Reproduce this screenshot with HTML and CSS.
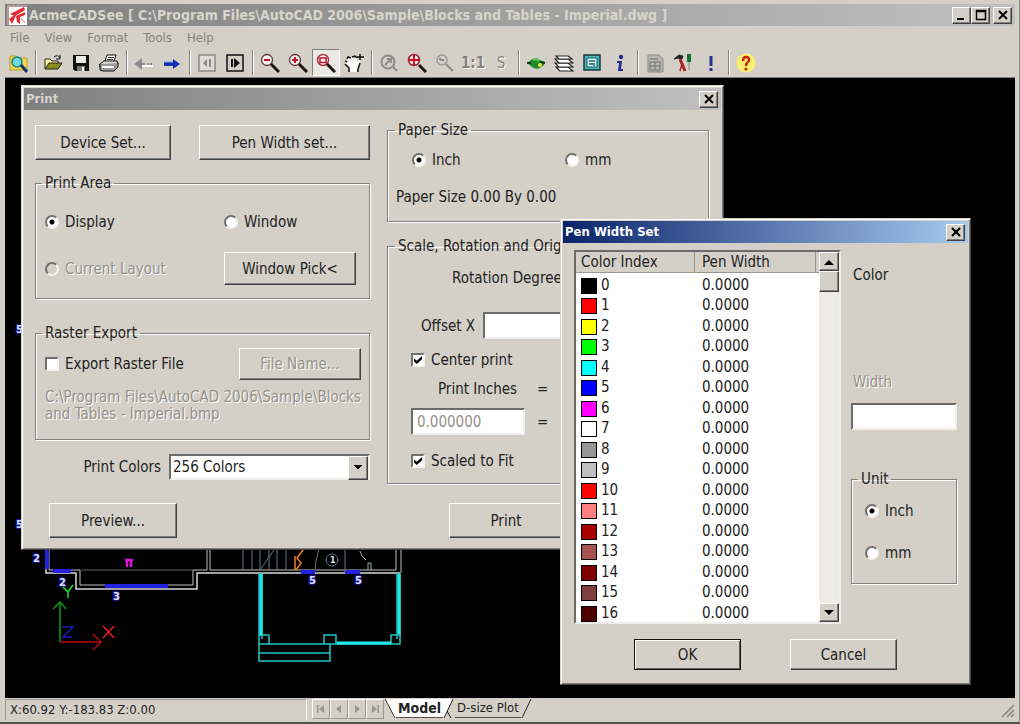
FILE: index.html
```
<!DOCTYPE html>
<html lang="en">
<head>
<meta charset="utf-8">
<title>AcmeCADSee</title>
<link rel="stylesheet" href="styles.css">
</head>
<body>
<div class="app">
  <header class="titlebar app-title">
    <svg class="logo" viewBox="0 0 20 20"><path d="M0 0h20v20H0z" fill="#fff"/><path d="M0 0h20v2H0zM0 0h2v20H0z" fill="#b99"/><path d="M3 9L17 2l1 3L8 11zM2 14l8-6-5 11zM9 11l9-4v3l-5 2v7l-3-2z" fill="#e32a35"/><path d="M14 13l4 5" stroke="#e77" stroke-width="1"/></svg>
    <h1 class="title-text">AcmeCADSee [ C:\Program Files\AutoCAD 2006\Sample\Blocks and Tables - Imperial.dwg ]</h1>
    <div class="win-buttons">
      <button class="win-btn" aria-label="Minimize"><svg viewBox="0 0 14 12"><path d="M2 10h7" stroke="#000" stroke-width="2"/></svg></button>
      <button class="win-btn" aria-label="Maximize"><svg viewBox="0 0 14 12"><path d="M2.5 1.5h9v9h-9zM2 2.5h10" fill="none" stroke="#000" stroke-width="1.5"/></svg></button>
      <button class="win-btn close" aria-label="Close"><svg viewBox="0 0 14 12"><path d="M3 2l8 8M11 2l-8 8" stroke="#000" stroke-width="2"/></svg></button>
    </div>
  </header>

  <nav class="menubar">
    <button>File</button><button>View</button><button>Format</button><button>Tools</button><button>Help</button>
  </nav>

  <div class="toolbar">
    <button class="tool" aria-label="Browse"><svg viewBox="0 0 20 20"><path d="M1 3h6l2 2h9v12H1z" fill="#f2dc4a" stroke="#b8962a"/><circle cx="8" cy="9" r="5" fill="#6fdcd8" stroke="#1d7d84" stroke-width="1.5"/><path d="M12 12l6 7" stroke="#12306e" stroke-width="3"/></svg></button>
    <i class="sep"></i>
    <button class="tool" aria-label="Open"><svg viewBox="0 0 20 20"><path d="M2 16V6h5l2 2h6v2" fill="#fff8a0" stroke="#222"/><path d="M2 16l4-6h13l-4 6z" fill="#8d8a1c" stroke="#222"/><path d="M11 4q4-3 6 1m0-3v4h-4" fill="none" stroke="#111"/></svg></button>
    <button class="tool" aria-label="Save"><svg viewBox="0 0 20 20"><path d="M2 2h16v16H4l-2-2z" fill="#111"/><path d="M5 3h10v7H5z" fill="#eceae4"/><path d="M6 13h8v5H6z" fill="#777"/><path d="M11 14h2v4h-2z" fill="#fff"/></svg></button>
    <button class="tool" aria-label="Print"><svg viewBox="0 0 20 20"><path d="M6 8l2-6h9l-2 6" fill="#fff" stroke="#111"/><path d="M9 4.5h6M8 6.5h6" stroke="#333"/><path d="M1 11l4-3h13l1 3-3 3H1z" fill="#ddd" stroke="#111"/><path d="M1 11v6l3 1h11l4-4v-4" fill="#999" stroke="#111"/><path d="M3 14h12" stroke="#fff" stroke-width="2"/></svg></button>
    <i class="sep"></i>
    <button class="tool" aria-label="Previous" disabled><svg viewBox="0 0 20 20"><path d="M3 13h16" stroke="#fff" fill="none" stroke-width="2"/><path d="M7 7l-5 4 5 4zM3 11h8m2 0h2m1 0h2" stroke="#8a8a8a" fill="#8a8a8a" stroke-width="2"/></svg></button>
    <button class="tool" aria-label="Next"><svg viewBox="0 0 20 20"><path d="M2 9h9V6l7 5-7 5v-3H2z" fill="#1532b0"/><path d="M2 9h9" stroke="#6fa3e8"/></svg></button>
    <i class="sep"></i>
    <button class="tool" aria-label="Previous layout" disabled><svg viewBox="0 0 20 20"><path d="M2 2h16v16H2z" fill="#dedbd4" stroke="#8a8a8a" stroke-width="1.5"/><path d="M10 6v8l-4-4zM12 6h2v8h-2z" fill="#8a8a8a"/></svg></button>
    <button class="tool" aria-label="Next layout"><svg viewBox="0 0 20 20"><path d="M2 2h16v16H2z" fill="#d4d0c8" stroke="#111" stroke-width="1.5"/><path d="M9 5v10l6-5zM6 6h2v8H6z" fill="#111"/></svg></button>
    <i class="sep"></i>
    <button class="tool" aria-label="Zoom out"><svg viewBox="0 0 20 20"><circle cx="7" cy="7" r="5.5" fill="#f8eeec" stroke="#5a3434" stroke-width="1.3"/><path d="M11 11l8 8" stroke="#1a1412" stroke-width="3"/><path d="M4 7h6" stroke="#b8122a" stroke-width="2"/></svg></button>
    <button class="tool" aria-label="Zoom in"><svg viewBox="0 0 20 20"><circle cx="7" cy="7" r="5.5" fill="#f8eeec" stroke="#5a3434" stroke-width="1.3"/><path d="M11 11l8 8" stroke="#1a1412" stroke-width="3"/><path d="M4 7h6M7 4v6" stroke="#c8122a" stroke-width="2"/></svg></button>
    <button class="tool pressed" aria-label="Zoom window" aria-pressed="true"><svg viewBox="0 0 20 20"><circle cx="7" cy="7" r="5.5" fill="#f8eeec" stroke="#a03440" stroke-width="1.5"/><path d="M11 11l8 8" stroke="#1a1412" stroke-width="3"/><path d="M4 5h6v4.5H4z" fill="#fff" stroke="#b8122a" stroke-width="1.5"/></svg></button>
    <button class="tool" aria-label="Pan"><svg viewBox="0 0 20 20"><path d="M5 13L1 10q0-2 2-1l2 1-2-4q0-2 2-1l2 3V5q1-2 2 0l1 3 1-3q2-1 2 1v3l2-2q2 0 1 2l-2 6-2 4H7z" fill="#fff"/><path d="M1 8l2 1M3 6l1-2 3 1M8 4l3-1 2 2M1 11l4 4v4M16 10l-2 6v3" stroke="#111" fill="none" stroke-width="1.5"/><path d="M16 1v6M13 4h7" stroke="#111" stroke-width="1.5"/></svg></button>
    <i class="sep"></i>
    <button class="tool" aria-label="Zoom dynamic" disabled><svg viewBox="0 0 20 20"><circle cx="9" cy="9" r="6.5" fill="none" stroke="#8c8c8c" stroke-width="2"/><path d="M14 14l4 4M6 12l6-6H8m4 0v4" stroke="#8c8c8c" stroke-width="2" fill="none"/></svg></button>
    <button class="tool" aria-label="Zoom extents"><svg viewBox="0 0 20 20"><circle cx="7" cy="7" r="5.5" fill="#f6d4d4" stroke="#8a2434" stroke-width="1.5"/><path d="M12 12l7 7" stroke="#1a1412" stroke-width="3"/><path d="M1 7h12M7 1v12" stroke="#c8122a" stroke-width="2"/><path d="M4 4l1 1M10 4l-1 1M4 10l1-1M10 10l-1-1" stroke="#fff" stroke-width="2"/></svg></button>
    <button class="tool" aria-label="Zoom previous" disabled><svg viewBox="0 0 20 20"><circle cx="7" cy="7" r="5" fill="none" stroke="#999" stroke-width="1.5"/><path d="M11 11l7 7M5 7h4M5 5v2" stroke="#8c8c8c" stroke-width="2"/></svg></button>
    <button class="tool tool-text" disabled>1:1</button>
    <button class="tool tool-text thin" disabled>S</button>
    <i class="sep"></i>
    <button class="tool" aria-label="View"><svg viewBox="0 0 20 20"><path d="M1 10l4-3q5-4 9 0l5 2-1 3-4 3q-5 2-8-1z" fill="#1d8a2c"/><path d="M1 10h4M14 9l5 1" stroke="#113a14" stroke-width="2"/><path d="M7 7q4-2 6 1" stroke="#63cf52" fill="none" stroke-width="2"/><circle cx="14" cy="12" r="2" fill="#e8e84a"/></svg></button>
    <button class="tool" aria-label="Layers"><svg viewBox="0 0 20 20"><g fill="#fff" stroke="#222" stroke-width="1.2"><path d="M6 18l-4-4h12l5 4z"/><path d="M5 14l-4-4h13l5 4z"/><path d="M5 10L1 6h13l5 4z"/><path d="M5 6L2 3h12l4 3z"/></g></svg></button>
    <button class="tool" aria-label="Layouts"><svg viewBox="0 0 20 20"><path d="M2 2h16v15H2z" fill="#45b9b7" stroke="#16343a" stroke-width="1.5"/><path d="M5 5h10v9H5z" fill="#d9f3ee" stroke="#16545a"/><path d="M7 8h6M7 11h4M12 10v3" stroke="#166a70" stroke-width="1.5"/></svg></button>
    <button class="tool" aria-label="Information"><svg viewBox="0 0 20 20"><circle cx="11" cy="4" r="2.2" fill="#1c2c94"/><path d="M7 8h5l-1 8h2v2H8l1-8H7z" fill="#1c2c94"/></svg></button>
    <i class="sep"></i>
    <button class="tool" aria-label="Batch" disabled><svg viewBox="0 0 20 20"><path d="M3 2h11l4 4v13H3z" fill="#bbb8b2" stroke="#888"/><path d="M5 6h8M5 9h10v8H5zM5 13h10M10 9v8" stroke="#858585" stroke-width="1.5" fill="none"/></svg></button>
    <button class="tool" aria-label="Settings"><svg viewBox="0 0 20 20"><path d="M1 6l5-4 4 1-1 3-4-1z" fill="#222" stroke="#222"/><path d="M7 6l5 12" stroke="#a32420" stroke-width="3"/><path d="M9 11l-2 7" stroke="#a32420" stroke-width="1.5"/><path d="M16 1v8" stroke="#13702c" stroke-width="4"/><path d="M16 9v8" stroke="#7d8b7f"/></svg></button>
    <button class="tool" aria-label="Notice"><svg viewBox="0 0 20 20"><path d="M10 3v10M10 15v3" stroke="#27358f" stroke-width="3"/></svg></button>
    <i class="sep"></i>
    <button class="tool" aria-label="Help"><svg viewBox="0 0 20 20"><circle cx="10" cy="10" r="9.5" fill="#fbf06e"/><path d="M7 8q0-4 3-4t3 3q0 2-2 3-1 1-1 3" stroke="#c22a12" stroke-width="2.5" fill="none"/><circle cx="10" cy="16" r="1.6" fill="#c22a12"/></svg></button>
  </div>

  <main class="canvas">
    <svg class="drawing" viewBox="5 78 1010 620" preserveAspectRatio="xMinYMin meet">
      <g fill="none">
        <path d="M46 540v33h30v16h121v-16h203" stroke="#d8d8d8" stroke-width="1.5"/>
        <path d="M49 540v30h31v15h113v-15h14M207 540v30M210 540v30h186v-30M401 540v33" stroke="#c0c0c0"/>
        <path d="M81 570h112" stroke="#666"/>
        <path d="M47 540v29M53 571h18M105 586h63M301 572h14M345 572h15" stroke="#2222e0" stroke-width="4"/>
        <path d="M243 540v30M252 540v30M260 540v30M269 540v30M277 540v30M286 540v30M260 570l14-20M315 570q1-20 10-30M345 540v32" stroke="#6a7480"/>
        <path d="M303 550l-6 8 4 5-5 7M295 556v14" stroke="#f08020" stroke-width="1.5"/>
        <circle cx="332" cy="560" r="6" stroke="#6a7890"/>
        <path d="M360 551l2 5 4 4M368 570v-7h3v7" stroke="#9ab0b8"/>
        <path d="M125 560h8M127 560v7M131 560v7" stroke="#e010e0" stroke-width="2.5"/>
        <path d="M259 573v88h71v-17M262 573v66M259 644h71M259 653h71M400 573v71h-70M397 573v66M259 635h10v9M324 644v-9h12v9M391 644v-9h10" stroke="#20c8c8" stroke-width="1.5"/>
        <path d="M261 574v61M399 574v60M337 643h54" stroke="#20e8e8" stroke-width="3"/>
        <path d="M60 642v-40M53 609l7-7 6 7" stroke="#0a9a12" stroke-width="1.5"/>
        <path d="M62 586l6 6 5-7M68 592v6" stroke="#20e020" stroke-width="1.5"/>
        <path d="M60 642h41M93 634l8 8-8 8" stroke="#b80c0c" stroke-width="1.5"/>
        <path d="M103 626l11 12M114 626l-11 12" stroke="#f01818" stroke-width="1.5"/>
        <path d="M62 627h11l-10 10h9" stroke="#1818b8" stroke-width="1.5"/>
      </g>
      <g class="marks">
        <text x="33" y="562">2</text><text x="59" y="586">2</text><text x="113" y="600">3</text><text x="309" y="584">5</text><text x="355" y="584">5</text><text x="16" y="333">5</text><text x="16" y="528">5</text><text x="330" y="563" class="plain">1</text>
      </g>
    </svg>

    <form class="dialog print-dialog">
      <header class="titlebar inactive">
        <h2 class="title-text">Print</h2>
        <button type="button" class="win-btn" aria-label="Close"><svg viewBox="0 0 14 12"><path d="M3 2l8 8M11 2l-8 8" stroke="#000" stroke-width="2"/></svg></button>
      </header>
      <div class="print-body">
        <div class="col left-col">
          <div class="row split">
            <button type="button" class="btn device-btn">Device Set...</button>
            <button type="button" class="btn pen-btn">Pen Width set...</button>
          </div>
          <fieldset class="group area-group">
            <legend>Print Area</legend>
            <label class="opt"><input type="radio" name="area" checked>Display</label>
            <label class="opt"><input type="radio" name="area">Window</label>
            <label class="opt disabled"><input type="radio" name="area" disabled>Current Layout</label>
            <button type="button" class="btn pick-btn">Window Pick&lt;</button>
          </fieldset>
          <fieldset class="group raster-group">
            <legend>Raster Export</legend>
            <div class="row split">
              <label class="opt"><input type="checkbox">Export Raster File</label>
              <button type="button" class="btn file-btn" disabled>File Name...</button>
            </div>
            <p class="path disabled">C:\Program Files\AutoCAD 2006\Sample\Blocks and Tables - Imperial.bmp</p>
          </fieldset>
          <div class="row colors-row">
            <label for="colors">Print Colors</label>
            <span class="select-wrap"><select id="colors"><option>256 Colors</option></select></span>
          </div>
        </div>
        <div class="col right-col">
          <fieldset class="group paper-group">
            <legend>Paper Size</legend>
            <div class="row paper-units">
              <label class="opt"><input type="radio" name="paper" checked>Inch</label>
              <label class="opt"><input type="radio" name="paper">mm</label>
            </div>
            <p>Paper Size 0.00 By 0.00</p>
          </fieldset>
          <fieldset class="group scale-group">
            <legend>Scale, Rotation and Origin</legend>
            <p class="rotation">Rotation Degree</p>
            <div class="row offset-row"><label for="offx">Offset X</label><input class="field" id="offx" type="text"></div>
            <label class="opt"><input type="checkbox" checked>Center print</label>
            <div class="row inches-row"><label for="inches">Print Inches</label><span class="eq">=</span></div>
            <div class="row value-row"><input class="field" id="inches" type="text" value="0.000000" disabled><span class="eq">=</span></div>
            <label class="opt"><input type="checkbox" checked>Scaled to Fit</label>
          </fieldset>
        </div>
      </div>
      <div class="print-actions">
        <button type="button" class="btn preview-btn">Preview...</button>
        <button type="button" class="btn do-print">Print</button>
      </div>
    </form>

    <form class="dialog pen-dialog">
      <header class="titlebar active">
        <h2 class="title-text">Pen Width Set</h2>
        <button type="button" class="win-btn" aria-label="Close"><svg viewBox="0 0 14 12"><path d="M3 2l8 8M11 2l-8 8" stroke="#000" stroke-width="2"/></svg></button>
      </header>
      <div class="pen-body">
        <div class="list">
          <table>
            <thead><tr><th class="c-index">Color Index</th><th class="c-width">Pen Width</th><th></th></tr></thead>
            <tbody>
              <tr><td><i class="sw c0"></i>0</td><td>0.0000</td><td></td></tr>
              <tr><td><i class="sw c1"></i>1</td><td>0.0000</td><td></td></tr>
              <tr><td><i class="sw c2"></i>2</td><td>0.0000</td><td></td></tr>
              <tr><td><i class="sw c3"></i>3</td><td>0.0000</td><td></td></tr>
              <tr><td><i class="sw c4"></i>4</td><td>0.0000</td><td></td></tr>
              <tr><td><i class="sw c5"></i>5</td><td>0.0000</td><td></td></tr>
              <tr><td><i class="sw c6"></i>6</td><td>0.0000</td><td></td></tr>
              <tr><td><i class="sw c7"></i>7</td><td>0.0000</td><td></td></tr>
              <tr><td><i class="sw c8"></i>8</td><td>0.0000</td><td></td></tr>
              <tr><td><i class="sw c9"></i>9</td><td>0.0000</td><td></td></tr>
              <tr><td><i class="sw c10"></i>10</td><td>0.0000</td><td></td></tr>
              <tr><td><i class="sw c11"></i>11</td><td>0.0000</td><td></td></tr>
              <tr><td><i class="sw c12"></i>12</td><td>0.0000</td><td></td></tr>
              <tr><td><i class="sw c13"></i>13</td><td>0.0000</td><td></td></tr>
              <tr><td><i class="sw c14"></i>14</td><td>0.0000</td><td></td></tr>
              <tr><td><i class="sw c15"></i>15</td><td>0.0000</td><td></td></tr>
              <tr><td><i class="sw c16"></i>16</td><td>0.0000</td><td></td></tr>
            </tbody>
          </table>
          <div class="scrollbar">
            <button type="button" class="sb-btn" aria-label="Scroll up"><svg viewBox="0 0 10 6"><path d="M0 6l5-5 5 5z"/></svg></button>
            <div class="thumb"></div>
            <button type="button" class="sb-btn down" aria-label="Scroll down"><svg viewBox="0 0 10 6"><path d="M0 0l5 5 5-5z"/></svg></button>
          </div>
        </div>
        <div class="pen-side">
          <p class="color-label">Color</p>
          <label class="disabled width-label" for="width">Width</label>
          <input class="field" id="width" type="text">
          <fieldset class="group unit-group">
            <legend>Unit</legend>
            <label class="opt"><input type="radio" name="unit" checked>Inch</label>
            <label class="opt"><input type="radio" name="unit">mm</label>
          </fieldset>
        </div>
      </div>
      <div class="pen-actions">
        <button type="button" class="btn default">OK</button>
        <button type="button" class="btn">Cancel</button>
      </div>
    </form>
  </main>

  <footer class="statusbar">
    <div class="coords">X:60.92 Y:-183.83 Z:0.00</div>
    <div class="tab-nav">
      <button aria-label="First tab"><svg viewBox="0 0 10 10"><path d="M1 1h1.500v8H1zM8 1v8L3 5z"/></svg></button>
      <button aria-label="Previous tab"><svg viewBox="0 0 10 10"><path d="M7 1v8L2 5z"/></svg></button>
      <button aria-label="Next tab"><svg viewBox="0 0 10 10"><path d="M3 1v8l5-4z"/></svg></button>
      <button aria-label="Last tab"><svg viewBox="0 0 10 10"><path d="M2 1v8l5-4zM7.500 1H9v8H7.500z"/></svg></button>
    </div>
    <div class="tabs">
      <svg class="slash" viewBox="0 0 12 20"><path d="M0 0h12v19h-2z" fill="#fff"/><path d="M1 0l10 19" stroke="#222" fill="none"/></svg>
      <button class="tab current">Model</button>
      <svg class="slash" viewBox="0 0 12 20"><path d="M0 0h10L1 19H0z" fill="#fff"/><path d="M10 0L1 19M4 12l4 7" stroke="#222" fill="none"/></svg>
      <button class="tab">D-size Plot</button>
      <svg class="slash" viewBox="0 0 12 20"><path d="M10 0L1 19" stroke="#222" fill="none"/></svg>
    </div>
    <svg class="grip" viewBox="0 0 14 14"><path d="M1 13L13 1M6 13l7-7M10 13l3-3" stroke="#85827b" stroke-width="1.5"/></svg>
  </footer>
</div>
</body>
</html>
```
FILE: styles.css
```
* { box-sizing: border-box; }
body {
  margin: 0;
  background: #d4d0c8;
  color: #222;
  font: 15px/18px "DejaVu Sans Condensed", "DejaVu Sans", Tahoma, sans-serif;
}
button, input, select { font: inherit; color: inherit; }
p, h1, h2 { margin: 0; font-size: inherit; }

.app {
  display: flex;
  flex-direction: column;
  height: 100vh;
  padding: 4px 4px 2px 5px;
  background: #d4d0c8;
  border-bottom: 2px solid #55534f;
  border-right: 1px solid #8a8780;
}

/* title bars */
.titlebar {
  display: flex;
  align-items: center;
  height: 22px;
  flex: none;
  padding: 0 3px 0 2px;
  background: linear-gradient(90deg, #808080, #c0c0c0);
  color: #d8d5ce;
}
.titlebar.active { background: linear-gradient(90deg, #0a246a, #a6caf0); color: #fff; }
.title-text { flex: 1; font-weight: bold; font-size: 13px; white-space: nowrap; overflow: hidden; }
.app-title .title-text { font-size: 14px; }
.logo { width: 20px; height: 20px; margin-right: 2px; }
.win-buttons { display: flex; }
.win-btn {
  display: grid;
  place-items: center;
  width: 19px;
  height: 17px;
  padding: 0;
  background: #d4d0c8;
  border: 1px solid;
  border-color: #fff #404040 #404040 #fff;
  box-shadow: inset -1px -1px #808080;
}
.win-btn svg { width: 14px; height: 12px; }
.win-btn.close { margin-left: 3px; }

/* menu and toolbar */
.menubar { display: flex; gap: 15px; padding: 3px 5px; height: 22px; flex: none; }
.menubar button { padding: 0; border: 0; background: none; color: #85827c; font-size: 13px; }
.toolbar { display: flex; align-items: center; height: 30px; flex: none; border-bottom: 1px solid #808080; }
.tool {
  display: grid;
  place-items: center;
  width: 28px;
  height: 27px;
  padding: 0;
  border: 0;
  background: none;
}
.tool svg { width: 20px; height: 20px; }
.tool:first-child { width: 27px; }
.tool.pressed { background: #ebe9e5; border: 1px solid; border-color: #808080 #fff #fff #808080; }
.tool-text { color: #85827c; font-weight: bold; font-size: 15px; text-shadow: 1px 1px #fff; }
.tool-text.thin { font-weight: normal; }
.sep { width: 2px; height: 25px; margin: 0 2px 0 3px; border-left: 1px solid #808080; border-right: 1px solid #fff; }

/* canvas with its floating dialogs */
.canvas { position: relative; flex: 1; min-height: 0; background: #000; overflow: hidden; }
.drawing { display: block; width: 1010px; height: 620px; }
.marks { fill: #dfe4ff; font: bold 10px "DejaVu Sans", sans-serif; stroke: #1818a0; stroke-width: 2px; paint-order: stroke; }
.marks .plain { stroke: none; font-size: 8px; }

.dialog {
  position: absolute;
  padding: 2px;
  background: #d4d0c8;
  border: 1px solid;
  border-color: #d4d0c8 #404040 #404040 #d4d0c8;
  box-shadow: inset 1px 1px #fff, inset -1px -1px #808080;
}
.print-dialog { left: 16px; top: 7px; width: 703px; }
.pen-dialog { left: 555px; top: 140px; width: 411px; }

/* controls */
.btn {
  height: 35px;
  padding: 0 8px;
  background: #d4d0c8;
  border: 1px solid;
  border-color: #fff #404040 #404040 #fff;
  box-shadow: inset -1px -1px #808080;
  white-space: nowrap;
}
.btn.default { border-color: #111; box-shadow: inset 1px 1px #fff, inset -1px -1px #606060; }
.btn:disabled, .disabled { color: #94918b; text-shadow: 1px 1px #fff; }
.group {
  margin: 0;
  min-width: 0;
  border: 1px solid #808080;
  box-shadow: 1px 1px #fff, inset 1px 1px #fff;
}
.group legend { padding: 0 3px; margin-left: -3px; }
.row { display: flex; align-items: center; }
.split { justify-content: space-between; }
.opt { display: flex; align-items: center; gap: 6px; white-space: nowrap; }
.opt input {
  appearance: none;
  flex: none;
  width: 14px;
  height: 14px;
  margin: 0;
  background: #fff;
  border: 2px solid;
  border-color: #707070 #f4f2ee #f4f2ee #707070;
}
.opt input[type="radio"] { border-radius: 50%; }
.opt input[type="radio"]:checked { background: radial-gradient(circle, #000 0 2px, #fff 3px); }
.opt input:disabled { background: #d4d0c8; }
.opt input[type="checkbox"]:checked::before {
  content: "";
  display: block;
  width: 8px;
  height: 8px;
  margin: 1px;
  background: #000;
  clip-path: polygon(0 30%, 35% 60%, 100% 0, 100% 40%, 35% 100%, 0 70%);
}
.field {
  min-width: 0;
  height: 27px;
  padding: 0 4px;
  background: #fff;
  border: 2px solid;
  border-color: #6a6a6a #f0eeea #f0eeea #6a6a6a;
}
.field:disabled { color: #94918b; }

/* print dialog */
.print-body {
  display: grid;
  grid-template-columns: minmax(0, 335fr) minmax(0, 322fr);
  gap: 17px;
  padding: 11px 12px 0 11px;
}
.col { display: flex; flex-direction: column; }
.left-col { padding-top: 4px; }
.device-btn { width: 136px; }
.pen-btn { width: 171px; }
.area-group {
  display: grid;
  grid-template-columns: 179px 1fr;
  row-gap: 21px;
  align-items: center;
  margin-top: 14px;
  padding: 21px 13px 13px 9px;
}
.pick-btn { height: 33px; }
.raster-group { margin-top: 25px; padding: 6px 8px 16px 9px; }
.file-btn { width: 122px; height: 32px; }
.path { margin-top: 9px; line-height: 17px; }
.colors-row { gap: 8px; justify-content: flex-end; margin-top: 14px; }
.select-wrap { position: relative; width: 201px; }
.select-wrap::after {
  content: "";
  position: absolute;
  right: 2px;
  top: 2px;
  width: 18px;
  height: 22px;
  background:
    linear-gradient(#000, #000) center 8px / 8px 1px no-repeat,
    linear-gradient(#000, #000) center 9px / 6px 1px no-repeat,
    linear-gradient(#000, #000) center 10px / 4px 1px no-repeat,
    linear-gradient(#000, #000) center 11px / 2px 1px no-repeat,
    #d4d0c8;
  border: 1px solid;
  border-color: #fff #404040 #404040 #fff;
  box-shadow: inset -1px -1px #808080;
  pointer-events: none;
}
.select-wrap select {
  appearance: none;
  display: block;
  width: 100%;
  height: 26px;
  padding: 0 2px;
  background: #fff;
  border: 2px solid;
  border-color: #6a6a6a #f0eeea #f0eeea #6a6a6a;
  border-radius: 0;
}
.paper-group { padding: 12px 8px 15px; }
.paper-group legend { margin-left: -1px; }
.paper-units { padding-left: 16px; margin-bottom: 19px; }
.paper-units .opt:first-child { width: 153px; }
.scale-group { margin-top: 15px; padding: 14px 7px 13px 23px; }
.scale-group legend { margin-left: -16px; }
.rotation { padding-left: 41px; }
.offset-row { gap: 8px; margin: 25px 0 12px; padding-left: 10px; }
.inches-row { margin: 11px 0 10px; padding-left: 27px; }
.inches-row label { width: 99px; }
.value-row { gap: 12px; margin-bottom: 17px; }
.value-row .field { width: 114px; }
.print-actions { display: flex; gap: 272px; padding: 19px 25px 9px; }
.preview-btn { width: 128px; }
.do-print { width: 114px; }

/* pen width dialog */
.pen-body { display: flex; gap: 10px; padding: 7px 11px 0; }
.list {
  display: flex;
  flex: 1;
  background: #fff;
  border: 2px solid;
  border-color: #6a6a6a #f0eeea #f0eeea #6a6a6a;
}
table { flex: 1; width: 100%; border-collapse: separate; border-spacing: 0; table-layout: fixed; }
th {
  height: 21px;
  padding: 0 6px 0 5px;
  background: #d4d0c8;
  font-weight: normal;
  text-align: left;
  border-right: 1px solid #9a978f;
  border-bottom: 1px solid #9a978f;
}
th + th { padding-left: 7px; }
th:last-child { padding: 0; border-right: 0; }
.c-index { width: 119px; }
.c-width { width: 121px; }
td { height: 20px; padding: 0 5px; line-height: 18px; vertical-align: bottom; white-space: nowrap; }
td + td { padding-left: 7px; }
td:last-child { padding: 0; }
tr:nth-child(odd) td { height: 21px; }
.sw { display: inline-block; width: 16px; height: 16px; margin-right: 4px; border: 1px solid #000; vertical-align: middle; }
.c0 { background: #000; } .c1 { background: #f00; } .c2 { background: #ff0; } .c3 { background: #0f0; }
.c4 { background: #0ff; } .c5 { background: #00f; } .c6 { background: #f0f; } .c7 { background: #fff; }
.c8 { background: #969696; } .c9 { background: #c0c0c0; } .c10 { background: #f00; } .c11 { background: #ff7f7f; }
.c12 { background: #a50000; } .c13 { background: #a55252; } .c14 { background: #7f0000; } .c15 { background: #7f3f3f; }
.c16 { background: #4c0000; }
.scrollbar { display: flex; flex: none; flex-direction: column; width: 20px; background: #edebe6; }
.sb-btn, .thumb {
  display: grid;
  place-items: center;
  height: 19px;
  padding: 0;
  background: #d4d0c8;
  border: 1px solid;
  border-color: #fff #404040 #404040 #fff;
  box-shadow: inset -1px -1px #808080;
}
.thumb { height: 21px; }
.sb-btn svg { width: 10px; height: 6px; }
.sb-btn.down { margin-top: auto; }
.pen-side { display: flex; flex: none; flex-direction: column; width: 106px; padding-top: 16px; }
.color-label, .width-label { padding-left: 2px; }
.width-label { margin: 89px 0 12px; }
.unit-group { display: grid; gap: 24px; margin-top: 40px; padding: 14px 13px 21px; }
.unit-group legend { margin-left: -7px; }
.pen-actions { display: flex; justify-content: center; gap: 49px; padding: 15px 0 12px; }
.pen-actions .btn { width: 107px; height: 31px; }

/* status bar */
.statusbar { display: flex; align-items: flex-start; height: 22px; flex: none; padding-top: 1px; }
.coords { width: 302px; padding-left: 4px; border: 1px solid; border-color: #9a978f #fff #d4d0c8 #9a978f; font-size: 13px; line-height: 20px; }
.tab-nav { display: flex; margin-left: 5px; }
.tab-nav button { width: 18px; height: 20px; padding: 0; display: grid; place-items: center; background: #d4d0c8; border: 1px solid; border-color: #fff #9a978f #9a978f #fff; }
.tab-nav svg { width: 10px; height: 10px; fill: #9a978f; }
.tabs { display: flex; }
.slash { width: 12px; height: 20px; }
.tab { height: 19px; padding: 0 2px; background: none; border: 0; border-bottom: 1px solid #55534f; font-size: 13px; line-height: 16px; }
.tab.current { background: #fff; font-weight: bold; font-size: 14px; }
.grip { width: 14px; height: 14px; margin: 5px 0 0 auto; }
```
